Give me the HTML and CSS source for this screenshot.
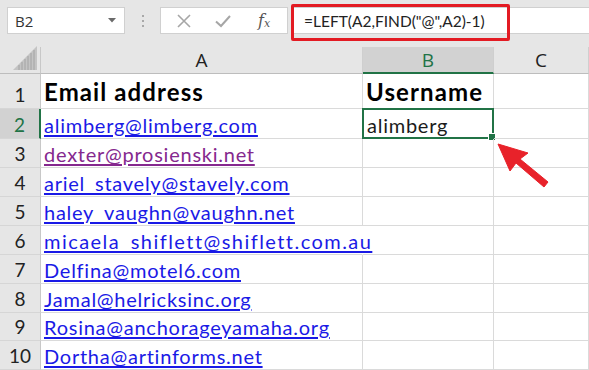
FILE: index.html
```html
<!DOCTYPE html>
<html>
<head>
<meta charset="utf-8">
<link rel="stylesheet" href="styles.css">
</head>
<body>
<div class="app">
  <div class="toolbar">
    <div class="namebox">
      <span class="name">B2</span>
      <svg class="dd" width="8" height="5" viewBox="0 0 8 5"><path d="M0 0 L8 0 L4 4.5 Z" fill="#6a6a6a"/></svg>
    </div>
    <div class="grip"><i></i><i></i><i></i></div>
    <div class="fxbox">
      <svg class="ico" width="16" height="16" viewBox="0 0 16 16"><path d="M2 2 L14 14 M14 2 L2 14" stroke="#a6a6a6" stroke-width="1.6" fill="none"/></svg>
      <svg class="ico" width="18" height="16" viewBox="0 0 18 16"><path d="M2 8.5 L7 13 L16 3" stroke="#a6a6a6" stroke-width="2" fill="none"/></svg>
      <span class="fx">f<sub>x</sub></span>
    </div>
    <div class="formula">
      <span class="ftext">=LEFT(A2,FIND("@",A2)-1)</span>
      <div class="redbox"></div>
    </div>
  </div>

  <div class="sheet">
    <div class="corner"><svg width="24" height="24" viewBox="0 0 24 24"><path d="M24 0 L24 24 L0 24 Z" fill="#c4c4c4"/><path d="M6 24V19M9 24V16M12 24V13M15 24V10M18 24V7M21 24V4" stroke="#a9a9a9" stroke-width="1.2"/></svg></div>
    <div class="ch">A</div>
    <div class="ch sel">B</div>
    <div class="ch last">C</div>

    <div class="rh r1">1</div>
    <div class="c r1 bold">Email address</div>
    <div class="c r1 bold">Username</div>
    <div class="c r1 last"></div>

    <div class="rh sel">2</div>
    <div class="c"><span class="link">alimberg@limberg.com</span></div>
    <div class="c active"><span>alimberg</span><i class="handle"></i></div>
    <div class="c last"></div>

    <div class="rh">3</div>
    <div class="c"><span class="link visited">dexter@prosienski.net</span></div>
    <div class="c"></div>
    <div class="c last"></div>

    <div class="rh">4</div>
    <div class="c"><span class="link">ariel_stavely@stavely.com</span></div>
    <div class="c"></div>
    <div class="c last"></div>

    <div class="rh">5</div>
    <div class="c"><span class="link">haley_vaughn@vaughn.net</span></div>
    <div class="c"></div>
    <div class="c last"></div>

    <div class="rh">6</div>
    <div class="c over"><span class="link wide">micaela_shiflett@shiflett.com.au</span></div>
    <div class="c"></div>
    <div class="c last"></div>

    <div class="rh">7</div>
    <div class="c"><span class="link">Delfina@motel6.com</span></div>
    <div class="c"></div>
    <div class="c last"></div>

    <div class="rh">8</div>
    <div class="c"><span class="link">Jamal@helricksinc.org</span></div>
    <div class="c"></div>
    <div class="c last"></div>

    <div class="rh">9</div>
    <div class="c"><span class="link">Rosina@anchorageyamaha.org</span></div>
    <div class="c"></div>
    <div class="c last"></div>

    <div class="rh">10</div>
    <div class="c"><span class="link">Dortha@artinforms.net</span></div>
    <div class="c"></div>
    <div class="c last"></div>
  </div>

  <svg class="arrow" width="60" height="50" viewBox="0 0 60 50">
    <path d="M2 2 L32 11 L24 17 L52 40 L48 45 L20 21 L14 29 Z" fill="#e8222a" stroke="#e8222a" stroke-width="1" stroke-linejoin="round"/>
  </svg>
</div>
</body>
</html>
```

FILE: styles.css
```css
* { box-sizing: border-box; }
html, body { margin: 0; padding: 0; }
body {
  width: 589px;
  height: 370px;
  overflow: hidden;
  background: #e6e6e6;
  font-family: Lato, "Open Sans", sans-serif;
  color: #1b1b1b;
}
.app { position: relative; width: 589px; height: 370px; }

.toolbar {
  height: 47px;
  display: flex;
  align-items: flex-start;
  padding-top: 7px;
  padding-left: 7px;
}
.namebox {
  width: 118px;
  height: 27px;
  background: #fff;
  border: 1px solid #d0d0d0;
  display: flex;
  align-items: center;
  justify-content: space-between;
  padding: 0 8px 0 7px;
}
.name { font-size: 15px; color: #333; font-family: "Open Sans", Lato, sans-serif; }
.dd { display: block; }
.grip {
  width: 35px;
  height: 27px;
  display: flex;
  flex-direction: column;
  align-items: center;
  justify-content: center;
  gap: 3px;
}
.grip i { display: block; width: 2px; height: 2px; background: #a8a8a8; }
.fxbox {
  width: 128px;
  height: 27px;
  background: #fff;
  border: 1px solid #d0d0d0;
  display: flex;
  align-items: center;
  padding-left: 15px;
  gap: 22px;
}
.ico { display: block; }
.fx {
  font-family: "DejaVu Serif", "Liberation Serif", serif;
  font-style: italic;
  font-size: 16px;
  color: #555;
  margin-left: 4px;
}
.fx sub { font-size: 11px; vertical-align: -1px; }
.formula {
  position: relative;
  flex: 1;
  margin-left: 6px;
  height: 27px;
  background: #fff;
  border-top: 1px solid #d0d0d0;
  border-bottom: 1px solid #d0d0d0;
  display: flex;
  align-items: center;
  padding-left: 10px;
}
.ftext { font-size: 15.5px; color: #222; font-family: Lato, sans-serif; }
.redbox {
  position: absolute;
  left: -3px;
  top: -4px;
  width: 219px;
  height: 37px;
  border: 3px solid #e31b23;
  border-radius: 2px;
}

.sheet {
  display: grid;
  grid-template-columns: 41px 322px 131px 95px;
  grid-template-rows: 27px 35px 30px 29px 29px 29px 29px 29px 29px 28px 29px;
  background: #fff;
}
.corner {
  background: #e6e6e6;
  border-right: 1px solid #c8c8c8;
  border-bottom: 1px solid #bdbdbd;
  display: flex;
  align-items: flex-end;
  justify-content: flex-end;
  padding: 0 3px 3px 0;
}
.corner svg { display: block; }
.ch {
  background: #e6e6e6;
  border-right: 1px solid #cfcfcf;
  border-bottom: 1px solid #bdbdbd;
  display: flex;
  align-items: center;
  justify-content: center;
  font-size: 19px;
  color: #222;
  font-family: "Open Sans", Lato, sans-serif;
}
.ch.sel {
  background: #d2d2d2;
  color: #217346;
  border-bottom: 2px solid #217346;
}
.ch.last { border-right: 1px solid #cfcfcf; }
.rh {
  background: #e6e6e6;
  border-right: 1px solid #c8c8c8;
  border-bottom: 1px solid #d6d6d6;
  display: flex;
  align-items: flex-end;
  justify-content: center;
  padding-bottom: 2px;
  font-size: 19px;
  color: #222;
}
.rh.sel {
  background: #d2d2d2;
  color: #217346;
  border-right: 2px solid #217346;
}
.c {
  position: relative;
  border-right: 1px solid #dadada;
  border-bottom: 1px solid #dadada;
  display: flex;
  align-items: flex-end;
  padding: 0 0 1px 3px;
  font-size: 20px;
  letter-spacing: 0.75px;
  white-space: nowrap;
}
.c.over { z-index: 1; border-right-color: transparent; }
.c.last { border-right: 1px solid #dadada; }
.c.r1 { padding-bottom: 2px; }
.bold { font-weight: bold; font-size: 24px; letter-spacing: 1.1px; color: #000; }
.link { color: #1a1ae6; text-decoration: underline; text-underline-offset: 2px; }
.link.visited { color: #85288e; }
.link.wide { letter-spacing: 1.45px; }
.active {
  border: 2px solid #217346;
  margin: -1px 0 0 -1px;
  padding-left: 3px;
  padding-bottom: 0;
}
.handle {
  position: absolute;
  right: -4px;
  bottom: -4px;
  width: 6px;
  height: 6px;
  background: #217346;
  border: 1px solid #fff;
  box-sizing: content-box;
}
.arrow {
  position: absolute;
  left: 496px;
  top: 142px;
}
```
